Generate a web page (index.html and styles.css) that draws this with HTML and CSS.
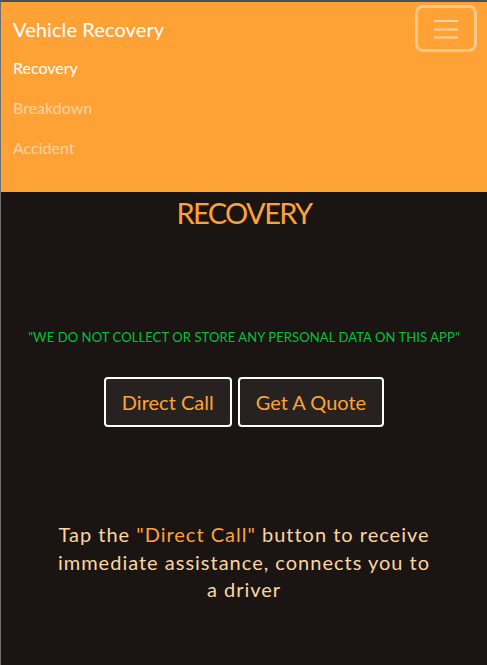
FILE: index.html
```html
<!DOCTYPE html>
<html lang="en">
<head>
<meta charset="utf-8">
<title>Vehicle Recovery</title>
<link rel="stylesheet" href="styles.css">
</head>
<body>
<div class="frame">
  <nav class="navbar">
    <div class="nav-top">
      <span class="brand">Vehicle Recovery</span>
      <button class="toggler" aria-label="Toggle navigation">
        <svg width="26" height="20" viewBox="0 0 26 20">
          <path d="M1 2h24M1 10.5h24M1 18.5h24" stroke="rgba(255,255,255,0.55)" stroke-width="2" fill="none"/>
        </svg>
      </button>
    </div>
    <ul class="nav-links">
      <li><a class="nav-link active">Recovery</a></li>
      <li><a class="nav-link">Breakdown</a></li>
      <li><a class="nav-link">Accident</a></li>
    </ul>
  </nav>
  <main class="content">
    <h1 class="title">RECOVERY</h1>
    <p class="notice">"WE DO NOT COLLECT OR STORE ANY PERSONAL DATA ON THIS APP"</p>
    <div class="actions">
      <button class="btn">Direct Call</button>
      <button class="btn">Get A Quote</button>
    </div>
    <p class="info">Tap the <span class="hl">"Direct Call"</span> button to receive immediate assistance, connects you to a driver</p>
  </main>
</div>
</body>
</html>
```

FILE: styles.css
```css
html, body {
  margin: 0;
  padding: 0;
  height: 100%;
}
body {
  background: #1a1412;
  font-family: Lato, "Open Sans", sans-serif;
}
.frame {
  min-height: 100%;
  box-sizing: border-box;
  border-top: 2px solid #4f4f4f;
  border-left: 1px solid #707070;
  background: #1a1412;
}
.navbar {
  background: #ffa236;
  padding: 3px 10px 24px 12px;
}
.nav-top {
  display: flex;
  justify-content: space-between;
  align-items: flex-start;
  height: 43px;
}
.brand {
  color: #fff;
  font-size: 20px;
  line-height: 30px;
  padding-top: 9px;
  letter-spacing: 0.1px;
}
.toggler {
  width: 62px;
  height: 47px;
  box-sizing: border-box;
  background: transparent;
  border: 3px solid rgba(255,255,255,0.4);
  border-radius: 8px;
  display: flex;
  align-items: center;
  justify-content: center;
  padding: 0;
}
.nav-links {
  list-style: none;
  margin: 0;
  padding: 0;
}
.nav-link {
  display: block;
  padding: 8px 0;
  font-size: 16px;
  line-height: 24px;
  color: rgba(255,255,255,0.55);
}
.nav-link.active {
  color: #fff;
}
.content {
  text-align: center;
}
.title {
  margin: 0;
  padding-top: 3px;
  font-size: 29px;
  line-height: 35px;
  font-weight: 400;
  letter-spacing: -1.6px;
  color: #ffa236;
}
.notice {
  margin: 97px 0 0;
  font-size: 13px;
  line-height: 20px;
  letter-spacing: 0.1px;
  color: #00c23c;
}
.actions {
  display: flex;
  justify-content: center;
  gap: 6px;
  margin-top: 30px;
}
.btn {
  height: 50px;
  padding: 0 16px;
  background: #272220;
  border: 2px solid #fff;
  border-radius: 4px;
  color: #ffa236;
  font-family: inherit;
  font-size: 20px;
}
.info {
  margin: 94px auto 0;
  max-width: 385px;
  font-size: 20px;
  line-height: 27.5px;
  letter-spacing: 1px;
  color: #fcd6a0;
}
.hl {
  color: #ffa236;
}
```
